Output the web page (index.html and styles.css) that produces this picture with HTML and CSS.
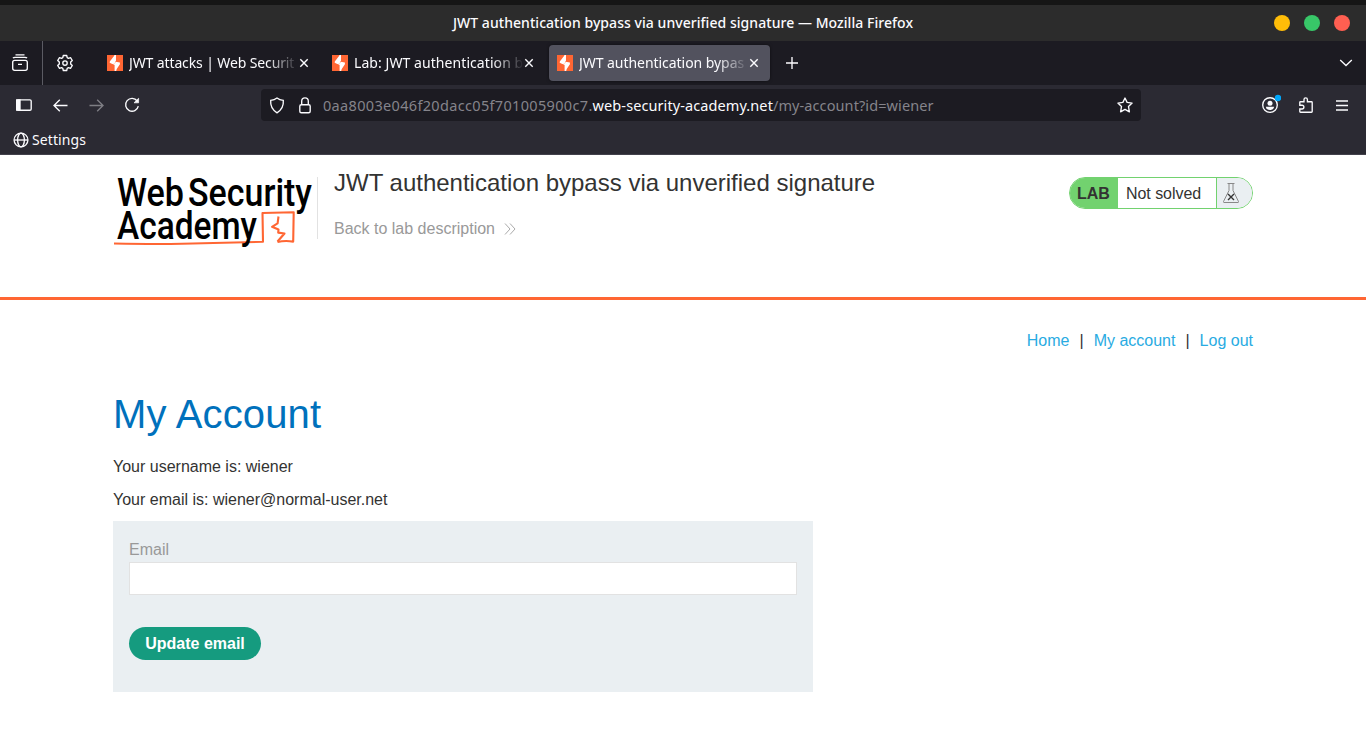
FILE: index.html
```html
<!DOCTYPE html>
<html lang="en">
<head>
<meta charset="utf-8">
<title>JWT authentication bypass via unverified signature</title>
<link rel="stylesheet" href="styles.css">
</head>
<body>
<svg width="0" height="0" class="defs">
  <symbol id="burp" viewBox="0 0 16 16"><rect width="16" height="16" fill="#ff6633"/><path d="M8.3 0V5.5L4 7.7L8.7 9.6V16" fill="none" stroke="#fff" stroke-width="1.2"/><path d="M7.8 0L2.8 6.4V7.8L7.6 8.8L8.7 5.5V0ZM8.6 6.8L12.9 7.6V9.2L8.4 16H7.6V9.4Z" fill="#fff"/></symbol>
  <symbol id="close" viewBox="0 0 10 10"><path d="M1.3 1.3L8.7 8.7M8.7 1.3L1.3 8.7" stroke="#fbfbfe" stroke-width="1.4" fill="none"/></symbol>
</svg>
<div class="desktop-edge"></div>
<header class="titlebar">
  <span class="window-side"></span>
  <span class="window-title">JWT authentication bypass via unverified signature — Mozilla Firefox</span>
  <span class="window-side controls"><i class="minimize"></i><i class="maximize"></i><i class="quit"></i></span>
</header>
<nav class="tabbar">
  <div class="view"><svg class="ic" width="18" height="18" viewBox="0 0 18 18"><rect x="1.7" y="6.3" width="14.6" height="10" rx="2"/><path d="M2 4.2Q2.5 3.4 4 3.4H14Q15.5 3.4 16 4.2M4.5 .9H13.5M7 10.3H11"/></svg></div>
  <div class="pinned"><svg class="ic" width="18" height="18" viewBox="0 0 18 18"><path d="M7.3 1.5H10.7L11.2 3.6L12.5 4.3L14.5 3.6L16.3 6.5L14.7 8.1V9.9L16.3 11.5L14.5 14.4L12.5 13.7L11.2 14.4L10.7 16.5H7.3L6.8 14.4L5.5 13.7L3.5 14.4L1.7 11.5L3.3 9.9V8.1L1.7 6.5L3.5 3.6L5.5 4.3L6.8 3.6Z" stroke-linejoin="round"/><circle cx="9" cy="9" r="2.2"/></svg></div>
  <div class="tabs">
    <div class="tab"><svg width="16" height="16"><use href="#burp"/></svg><span class="tab-label">JWT attacks | Web Securit</span><svg width="10" height="10"><use href="#close"/></svg></div>
    <div class="tab"><svg width="16" height="16"><use href="#burp"/></svg><span class="tab-label">Lab: JWT authentication b</span><svg width="10" height="10"><use href="#close"/></svg></div>
    <div class="tab active"><svg width="16" height="16"><use href="#burp"/></svg><span class="tab-label">JWT authentication bypas</span><svg width="10" height="10"><use href="#close"/></svg></div>
  </div>
  <svg class="ic plus" width="12" height="12" viewBox="0 0 12 12"><path d="M6 0V12M0 6H12"/></svg>
  <svg class="ic chevron" width="14" height="8" viewBox="0 0 14 8"><path d="M1.2 1L7 6.6L12.8 1"/></svg>
</nav>
<div class="toolbar">
  <div class="buttons">
    <span><svg class="ic" width="16" height="12" viewBox="0 0 16 12"><rect x=".8" y=".8" width="14.4" height="10.4" rx="1.3"/><path d="M.5 1H4V11H.5Z" fill="#fbfbfe"/></svg></span>
    <span><svg class="ic" width="15" height="13" viewBox="0 0 15 13"><path d="M14.5 6.5H1M6.8 .8L1 6.5L6.8 12.2"/></svg></span>
    <span><svg class="ic dim" width="15" height="13" viewBox="0 0 15 13"><path d="M.5 6.5H14M8.2 .8L14 6.5L8.2 12.2"/></svg></span>
    <span><svg class="ic" width="16" height="16" viewBox="0 0 16 16"><path d="M13.2 4A6.4 6.4 0 1 0 14.3 9.1"/><path d="M14.6 1.3V5.8H10Z" fill="#fbfbfe" stroke-width=".7"/></svg></span>
  </div>
  <div class="urlbar">
    <svg class="ic" width="16" height="17" viewBox="0 0 16 17"><path d="M8 1Q10.5 2.9 14.3 3.4Q15 11.5 8 15.8Q1 11.5 1.7 3.4Q5.5 2.9 8 1Z"/></svg>
    <svg class="ic lock" width="12" height="17" viewBox="0 0 12 17"><rect x=".8" y="7.7" width="10.4" height="8" rx="1.5"/><path d="M2.7 7.5V4.2A3.3 3.3 0 0 1 9.3 4.2V7.5"/></svg>
    <span class="url"><span class="subdomain">0aa8003e046f20dacc05f701005900c7.</span><b>web-security-academy.net</b>/my-account?id=wiener</span>
    <svg class="ic" width="16" height="16" viewBox="0 0 16 16"><path d="M8 1L10.1 5.4L15.1 6.1L11.5 9.6L12.4 14.8L8 12.4L3.6 14.8L4.5 9.6L.9 6.1L5.9 5.4Z" stroke-linejoin="round"/></svg>
  </div>
  <div class="buttons">
    <span><svg class="ic account" width="22" height="22" viewBox="0 0 22 22"><circle cx="11" cy="11" r="7.3"/><circle cx="11" cy="9.3" r="2.5" fill="#fbfbfe" stroke="none"/><path d="M6.8 12.8H15.2Q14.4 16 11 16T6.8 12.8Z" fill="#fbfbfe" stroke="none"/><circle cx="19" cy="4" r="3.2" fill="#00a6fa" stroke="none"/></svg></span>
    <span><svg class="ic" width="14" height="16" viewBox="0 0 14 16"><path d="M.8 6V5.2Q.8 4.7 1.5 4.7H5V2.5A1.7 1.7 0 0 1 8.4 2.5V4.7H12.4Q13.2 4.7 13.2 5.4V14.5Q13.2 15.2 12.4 15.2H1.5Q.8 15.2 .8 14.5V12H3A1.7 1.7 0 0 0 3 8.2H.8Z"/></svg></span>
    <span><svg class="ic" width="12" height="11" viewBox="0 0 12 11"><path d="M0 1H12M0 5.5H12M0 10H12"/></svg></span>
  </div>
</div>
<div class="bookmarks"><svg class="ic" width="16" height="16" viewBox="0 0 16 16"><circle cx="8" cy="8" r="6.9"/><ellipse cx="8" cy="8" rx="3.4" ry="6.9"/><path d="M1.2 8H14.8"/></svg><span>Settings</span></div>

<section class="lab-header">
  <svg class="logo" width="205" height="80" viewBox="0 0 205 80">
    <g class="logo-mark"><path d="M1 73.5Q55 74.6 90 73.2L150 71.8L149.5 43L180.7 42.3L180.2 71.6Q172 70.3 164.5 72"/><path d="M165.5 46.5L164.6 53.4L159 56.8L165.5 59.5L165.2 62.6L171.5 63.5L164.5 71.5"/></g>
    <g class="logo-text">
      <text x="4" y="36" textLength="67" lengthAdjust="spacingAndGlyphs">Web</text>
      <text x="75" y="36" textLength="124" lengthAdjust="spacingAndGlyphs">Security</text>
      <text x="4" y="69" textLength="140" lengthAdjust="spacingAndGlyphs">Academy</text>
    </g>
  </svg>
  <div class="lab-title">
    <h2>JWT authentication bypass via unverified signature</h2>
    <a>Back to lab description <svg width="12" height="12" viewBox="0 0 12 12"><path d="M1 .5L6 6L1 11.5M6 .5L11 6L6 11.5"/></svg></a>
  </div>
  <div class="lab-status"><strong>LAB</strong><span>Not solved</span><i><svg width="18" height="22" viewBox="0 0 18 22"><path d="M5.5 1.5H12.5M7 1.5V8.5L1.5 19.5Q1.3 20.5 2 20.5H16Q16.7 20.5 16.5 19.5L11 8.5V1.5"/><path class="cross" d="M6 12L12 18M12 12L6 18"/></svg></i></div>
</section>
<main class="account-page">
  <nav class="links"><a>Home</a><span>|</span><a>My account</a><span>|</span><a>Log out</a></nav>
  <h1>My Account</h1>
  <p>Your username is: wiener</p>
  <p>Your email is: wiener@normal-user.net</p>
  <form>
    <label for="email">Email</label>
    <input id="email" type="email">
    <button type="button">Update email</button>
  </form>
</main>
</body>
</html>
```
FILE: styles.css
```css
* { box-sizing: border-box; }
body { margin: 0; background: #fff; color: #333332; font: 16px/19px "Liberation Sans", Arial, sans-serif; height: 745px; overflow: hidden; }
svg { display: block; flex: none; }
.defs { position: absolute; }
.ic { fill: none; stroke: #fbfbfe; stroke-width: 1.35; }
.desktop-edge { height: 5px; background: #161616; }
.titlebar, .tabbar, .toolbar, .bookmarks { font-family: "Noto Sans", sans-serif; display: flex; align-items: center; color: #fbfbfe; white-space: nowrap; }
.titlebar { height: 36px; background: #2c2c2c; justify-content: space-between; }
.window-side { width: 120px; display: flex; }
.window-title { font-size: 14px; font-weight: 500; letter-spacing: .05px; padding-bottom: 2px; }
.controls { justify-content: flex-end; gap: 14px; padding-right: 16px; }
.controls i { width: 16px; height: 16px; border-radius: 50%; }
.minimize { background: #ffbd08; }
.maximize { background: #38c768; }
.quit { background: #ff5f51; }
.tabbar { height: 44px; background: #1c1b22; }
.view { width: 43px; height: 44px; border-right: 1px solid #5b5b63; padding: 13px 0 0 11px; }
.pinned { width: 56px; padding-left: 13px; }
.tabs { display: flex; gap: 4px; }
.tab { width: 221px; height: 36px; border-radius: 4px; padding: 0 11px 0 8px; display: flex; align-items: center; }
.tab.active { background: #52525e; box-shadow: 0 0 3px #0008; }
.tab-label { flex: 1; min-width: 0; margin-left: 6px; overflow: hidden; font-size: 14px; line-height: 22px; letter-spacing: .07px; mask-image: linear-gradient(to left, transparent, #000 32px); }
.tab:first-child .tab-label { letter-spacing: -.12px; }
.tab.active .tab-label { letter-spacing: -.05px; }
.plus { margin-left: 16px; }
.chevron { margin-left: auto; margin-right: 13px; }
.toolbar { height: 40px; background: #2b2a33; padding: 0 6px; }
.buttons { display: flex; }
.buttons span { width: 36px; height: 32px; display: flex; align-items: center; justify-content: center; }
.dim { opacity: .4; }
.urlbar { width: 880px; height: 32px; border-radius: 4px; background: #1c1b22; display: flex; align-items: center; padding: 0 8px; }
.buttons:first-child { margin-right: 111px; }
.buttons:last-child { margin-left: auto; }
.lock { margin-left: 14px; }
.url { flex: 1; margin-left: 12px; color: #85848b; font-size: 14.5px; letter-spacing: .09px; }
.subdomain { letter-spacing: .33px; }
.url b { font-weight: 400; color: #fbfbfe; }
.bookmarks { height: 30px; background: #2b2a33; border-bottom: 1px solid #42414b; padding-left: 13px; gap: 3px; font-size: 14px; letter-spacing: .1px; }
.lab-header { height: 145px; border-bottom: 3px solid #ff6633; display: flex; padding: 0 113px; }
.logo { margin-top: 15px; }
.logo-text { font: 500 38px Roboto, sans-serif; fill: #000; }
.logo-mark { fill: none; stroke: #ff6633; stroke-width: 2.1; stroke-linejoin: round; }
.lab-title { height: 62px; margin-top: 22px; margin-left: -1px; padding-left: 16px; border-left: 1px solid #e2e2e2; flex: 1; }
.lab-title h2 { font-size: 24px; line-height: 28px; font-weight: 400; margin: -8px 0 22px; }
.lab-title a { display: flex; gap: 9px; align-items: center; color: #999; }
.lab-title a svg { fill: none; stroke: #aaa; stroke-width: 1; }
.lab-status { margin-top: 22px; width: 184px; height: 32px; border: 1px solid #72d26f; border-radius: 16px; overflow: hidden; display: flex; line-height: 31px; }
.lab-status strong { width: 48px; padding-left: 7px; background: #72d26f; }
.lab-status span { flex: 1; padding-left: 8px; letter-spacing: -.05px; }
.lab-status i { width: 36px; border-left: 1px solid #72d26f; background: #eaeff2; padding: 4px 0 0 5px; }
.lab-status svg { fill: none; stroke: #888; stroke-width: 1; }
.lab-status .cross { stroke: #333; stroke-width: 1.4; }
.account-page { padding: 31px 113px 0; }
.links { display: flex; justify-content: flex-end; gap: 10px; }
.links a { color: #29abe2; }
h1 { color: #0071bc; font-size: 40px; line-height: 46px; font-weight: 400; margin: 41px 0 20px; letter-spacing: .15px; }
p { margin: 0 0 14px; }
form { width: 700px; height: 171px; margin-top: -2px; background: #eaeff2; padding: 19px 16px 0; display: flex; flex-direction: column; align-items: flex-start; }
label { color: #999; }
input { width: 668px; height: 33px; margin-top: 3px; border: 1px solid #e2e2e2; background: #fff; padding: 0 8px; }
button { width: 132px; height: 33px; margin-top: 32px; border: 0; border-radius: 17px; background: #159b7f; color: #fff; font: 700 16px "Liberation Sans", Arial, sans-serif; padding: 0; }
```
